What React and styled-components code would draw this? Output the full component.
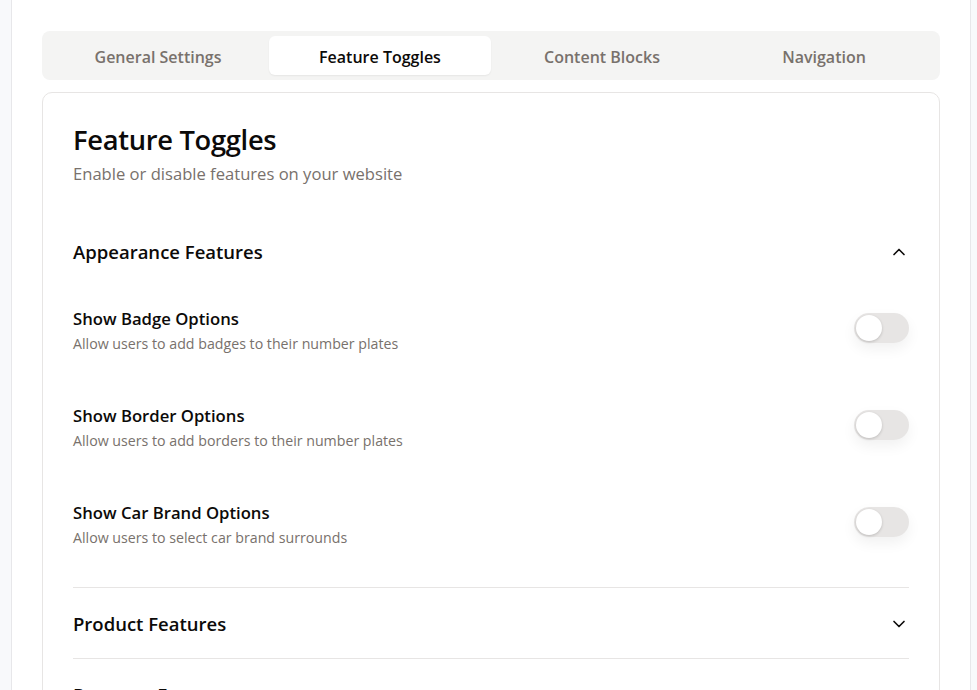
import React, { useState } from 'react'
import styled, { createGlobalStyle } from 'styled-components'
import { ChevronUp, ChevronDown } from 'lucide-react'

const GlobalStyle = createGlobalStyle`
  html, body {
    margin: 0;
    padding: 0;
    background: #f8f9fb;
    font-family: "Open Sans", "Noto Sans", sans-serif;
    color: #0c0a09;
  }
  * { box-sizing: border-box; }
`

const Page = styled.div`
  width: 960px;
  min-height: 100vh;
  margin-left: 11px;
  background: #ffffff;
  border-left: 1px solid #e7e7ea;
  border-right: 1px solid #e7e7ea;
  padding: 31px 30px 0;
`

const TabList = styled.div`
  display: grid;
  grid-template-columns: repeat(4, 1fr);
  padding: 5px;
  background: #f4f4f3;
  border-radius: 8px;
`

const Tab = styled.button`
  height: 39px;
  padding: 2px 0 0;
  border: none;
  border-radius: 6px;
  background: ${p => (p.$active ? '#ffffff' : 'transparent')};
  box-shadow: ${p => (p.$active ? '0 1px 2px rgba(0,0,0,0.06)' : 'none')};
  color: ${p => (p.$active ? '#0c0a09' : '#78716c')};
  font-family: inherit;
  font-size: 16px;
  font-weight: 600;
  cursor: pointer;
`

const Card = styled.section`
  margin-top: 12px;
  border: 1px solid #e7e5e4;
  border-radius: 10px;
  padding: 30px 30px 0;
  background: #fff;
`

const Title = styled.h1`
  margin: 0;
  font-size: 27.3px;
  line-height: 34px;
  font-weight: 600;
  letter-spacing: -0.3px;
`

const Subtitle = styled.p`
  margin: 5px 0 0;
  font-size: 16.6px;
  line-height: 24px;
  color: #78716c;
`

const Sections = styled.div`
  margin-top: 30px;
`

const Section = styled.div`
  border-bottom: 1px solid #e7e5e4;
`

const SectionHeader = styled.button`
  width: 100%;
  display: flex;
  align-items: center;
  justify-content: space-between;
  padding: 23px 0 21px;
  border: none;
  background: none;
  font-family: inherit;
  font-size: 18.5px;
  line-height: 26px;
  font-weight: 600;
  color: #0c0a09;
  text-align: left;
  cursor: pointer;
`

const SectionBody = styled.div`
  display: flex;
  flex-direction: column;
  gap: 50px;
  padding: 21px 0 39px;
`

const Row = styled.div`
  display: flex;
  align-items: center;
  justify-content: space-between;
`

const RowText = styled.div`
  display: flex;
  flex-direction: column;
`

const RowTitle = styled.span`
  font-size: 16.7px;
  line-height: 24px;
  font-weight: 600;
`

const RowDesc = styled.span`
  margin-top: 3px;
  font-size: 14.2px;
  line-height: 20px;
  color: #78716c;
`

const Switch = styled.button`
  position: relative;
  width: 55px;
  height: 30px;
  margin-bottom: 5px;
  padding: 0;
  border: none;
  border-radius: 15px;
  background: ${p => (p.$on ? '#0c0a09' : '#e7e5e4')};
  box-shadow: 0 6px 14px rgba(0, 0, 0, 0.06);
  cursor: pointer;
  flex-shrink: 0;

  &::after {
    content: '';
    position: absolute;
    top: 2px;
    left: ${p => (p.$on ? '27px' : '2px')};
    width: 26px;
    height: 26px;
    border-radius: 50%;
    background: #fff;
    box-shadow: 0 1px 3px rgba(0, 0, 0, 0.18);
    transition: left 0.15s;
  }
`

const tabs = ['General Settings', 'Feature Toggles', 'Content Blocks', 'Navigation']

const sections = [
  {
    name: 'Appearance Features',
    open: true,
    items: [
      { title: 'Show Badge Options', desc: 'Allow users to add badges to their number plates' },
      { title: 'Show Border Options', desc: 'Allow users to add borders to their number plates' },
      { title: 'Show Car Brand Options', desc: 'Allow users to select car brand surrounds' },
    ],
  },
  { name: 'Product Features', open: false, items: [] },
  { name: 'Payment Features', open: false, items: [] },
]

const App = () => {
  const [toggles, setToggles] = useState({})

  return (
    <>
      <GlobalStyle />
      <Page>
        <TabList>
          {tabs.map(t => (
            <Tab key={t} $active={t === 'Feature Toggles'}>{t}</Tab>
          ))}
        </TabList>
        <Card>
          <Title>Feature Toggles</Title>
          <Subtitle>Enable or disable features on your website</Subtitle>
          <Sections>
            {sections.map(s => (
              <Section key={s.name}>
                <SectionHeader>
                  {s.name}
                  {s.open ? <ChevronUp size={20} strokeWidth={2} /> : <ChevronDown size={20} strokeWidth={2} />}
                </SectionHeader>
                {s.open && (
                  <SectionBody>
                    {s.items.map(it => (
                      <Row key={it.title}>
                        <RowText>
                          <RowTitle>{it.title}</RowTitle>
                          <RowDesc>{it.desc}</RowDesc>
                        </RowText>
                        <Switch
                          $on={!!toggles[it.title]}
                          onClick={() => setToggles({ ...toggles, [it.title]: !toggles[it.title] })}
                        />
                      </Row>
                    ))}
                  </SectionBody>
                )}
              </Section>
            ))}
          </Sections>
        </Card>
      </Page>
    </>
  )
}

export default App
